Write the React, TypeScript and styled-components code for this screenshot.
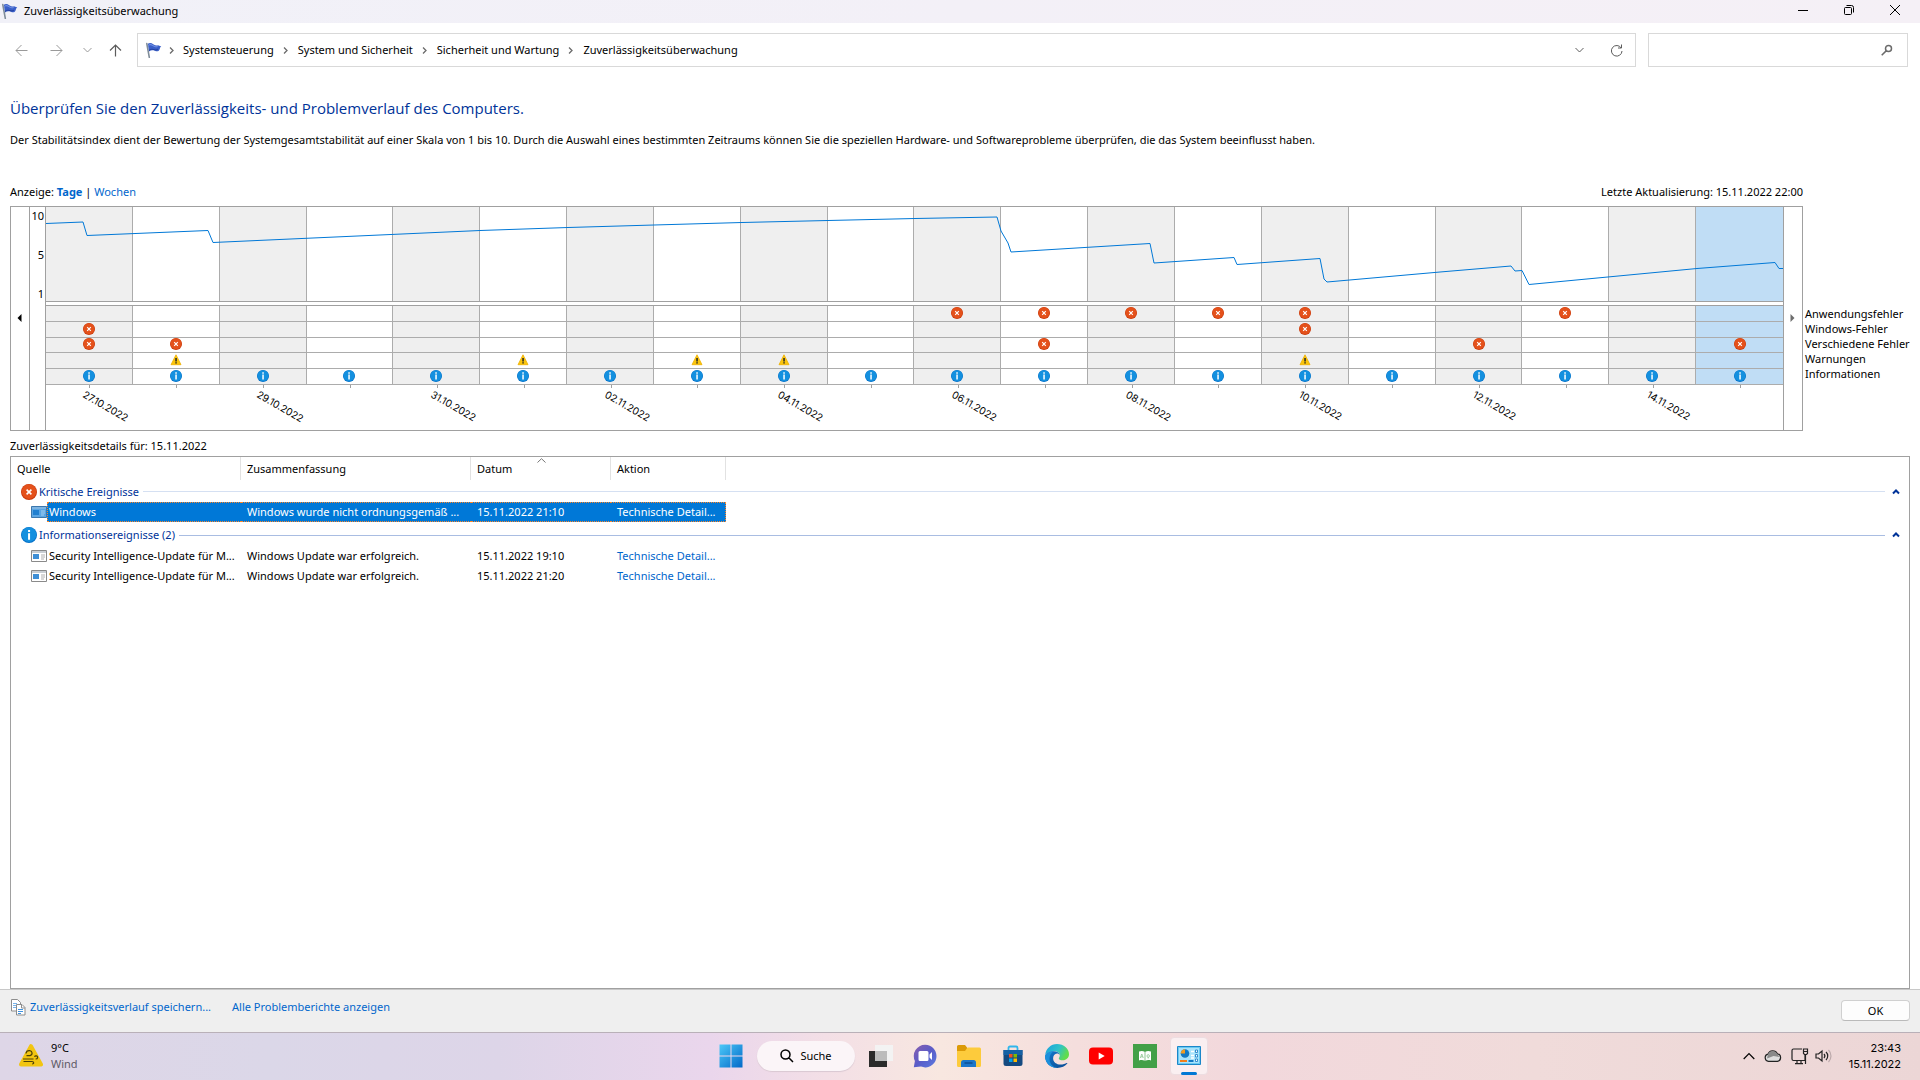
import React from 'react';
import styled, { createGlobalStyle, css } from 'styled-components';

const ui = '"Noto Sans", "Open Sans", sans-serif';
const uiNumbers = 'Inter, "Noto Sans", sans-serif';
const line = '#a0a0a0';
const link = '#0066cc';
const navy = '#003399';

const GlobalStyle = createGlobalStyle`
  *, *::before, *::after { box-sizing: border-box; }
  html, body { margin: 0; padding: 0; }
  body { background: #fff; color: #000; font: 11px/16px ${ui}; }
  button, input { font: inherit; color: inherit; }
  svg { display: block; flex: none; }
`;

/* ---------- shell ---------- */

const Desktop = styled.div`
  display: flex;
  flex-direction: column;
  min-height: 100vh;
`;

const PlainButton = styled.button`
  display: flex;
  align-items: center;
  justify-content: center;
  padding: 0;
  border: 0;
  background: none;
`;

const TitleBar = styled.header`
  display: flex;
  align-items: center;
  height: 23px;
  padding: 0 2px 1px;
  background: linear-gradient(90deg, #f1f1f8, #f3f0f7 50%, #f5f0f6);
`;

const WindowTitle = styled.h1`
  flex: 1;
  margin: 0;
  padding-left: 6px;
  font-size: 11px;
  font-weight: 400;
`;

const WindowButton = styled(PlainButton)`
  width: 46px;
  height: 20px;
  align-self: flex-start;
`;

const NavBar = styled.nav`
  display: flex;
  align-items: center;
  padding: 10px 12px 10px 4px;
`;

const NavButton = styled(PlainButton)<{ $width: number; $dim?: boolean }>`
  width: ${p => p.$width}px;
  height: 32px;
  color: ${p => (p.$dim ? '#9a9a9a' : '#5c5c5c')};
`;

const AddressBar = styled.div`
  display: flex;
  align-items: center;
  flex: 1;
  height: 34px;
  margin: 0 12px 0 7px;
  padding-left: 8px;
  border: 1px solid #d9d9d9;
  color: #6b6b6b;
`;

const Crumbs = styled.ol`
  display: flex;
  flex: 1;
  margin: 0;
  padding: 0;
  list-style: none;
`;

const Crumb = styled.li`
  display: flex;
  align-items: center;

  svg { margin: 0 8px; }
  &:first-child svg { margin: 0 7px 0 6px; }
`;

const CrumbLink = styled.a`
  color: #000;
  text-decoration: none;
`;

const SearchBox = styled.label`
  display: flex;
  align-items: center;
  width: 260px;
  height: 34px;
  padding-right: 14px;
  border: 1px solid #d9d9d9;
  color: #6b6b6b;
`;

const SearchInput = styled.input`
  flex: 1;
  min-width: 0;
  height: 30px;
  padding: 0 8px;
  border: 0;
  outline: 0;
  background: none;
`;

/* ---------- page ---------- */

const Main = styled.main`
  display: flex;
  flex-direction: column;
  flex: 1;
  padding: 19px 10px 0;
`;

const Heading = styled.h2`
  margin: 0 0 12px;
  color: ${navy};
  font: 400 15px/24px "Open Sans", "Noto Sans", sans-serif;
`;

const Intro = styled.p`
  margin: 0 0 36px;
`;

const ViewRow = styled.div`
  display: flex;
  justify-content: space-between;
  margin: 0 107px 6px 0;
`;

const TextLink = styled.a<{ $strong?: boolean }>`
  color: ${link};
  font-weight: ${p => (p.$strong ? 700 : 400)};
  text-decoration: none;
`;

const ChartRow = styled.section`
  display: flex;
`;

const ChartFrame = styled.div`
  display: flex;
  flex: 1;
  min-width: 0;
  border: 1px solid ${line};
`;

const ScrollButton = styled(PlainButton)<{ $enabled?: boolean }>`
  width: 18px;
  padding: 0 2px 2px 0;
  color: ${p => (p.$enabled ? '#000' : '#6d6d6d')};
`;

const Scale = styled.div`
  display: flex;
  flex-direction: column;
  justify-content: space-between;
  width: 15px;
  height: 95px;
  padding: 1px 1px 0 0;
  text-align: right;
`;

const ScaleColumn = styled.div`
  border-left: 1px solid ${line};
`;

const Plot = styled.div`
  flex: 1;
  min-width: 0;
  border: solid ${line};
  border-width: 0 1px;
`;

const DayGrid = styled.div`
  position: relative;
  display: grid;
  grid-template-columns: repeat(20, minmax(0, 1fr));
`;

const TrendGrid = styled(DayGrid)`
  height: 95px;
  border-bottom: 1px solid ${line};
`;

const EventGrid = styled(DayGrid)`
  grid-template-rows: repeat(5, minmax(0, 1fr));
  height: 80px;
  margin-top: 3px;
  border-top: 1px solid ${line};
`;

const dayFill = css<{ $day: number }>`
  background: ${p => (p.$day === 19 ? '#c0ddf5' : p.$day % 2 ? '#fff' : '#efefef')};
  border-right: ${p => (p.$day === 19 ? 0 : 1)}px solid #acacac;
`;

const TrendCell = styled.div<{ $day: number }>`
  ${dayFill}
`;

const EventCell = styled.div<{ $day: number }>`
  ${dayFill}
  display: flex;
  align-items: center;
  justify-content: center;
  padding-bottom: 1px;
  border-bottom: 1px solid #acacac;
`;

const TrendLine = styled.svg`
  position: absolute;
  inset: 0;
  width: 100%;
  height: 94px;
`;

const DateGrid = styled(DayGrid)`
  height: 45px;
`;

const DateCell = styled.div`
  &::before {
    content: '';
    display: block;
    width: 1px;
    height: 3px;
    margin-left: 50%;
    background: ${line};
  }
`;

const DateLabel = styled.time`
  display: block;
  margin-left: calc(50% - 2px);
  font: 10px/12px ${uiNumbers};
  white-space: nowrap;
  transform: rotate(30deg);
  transform-origin: left top;
`;

const Legend = styled.ul`
  width: 107px;
  margin: 0;
  padding: 100px 0 0 2px;
  list-style: none;
  line-height: 15px;
  white-space: nowrap;
`;

const Caption = styled.h3`
  margin: 7px 0 2px;
  font-size: 11px;
  font-weight: 400;
`;

const ListBox = styled.section`
  flex: 1;
  border: 1px solid ${line};
`;

const Table = styled.table`
  width: 100%;
  table-layout: fixed;
  border-collapse: separate;
  border-spacing: 0;
`;

const Col = styled.col<{ $width?: number }>`
  width: ${p => (p.$width ? `${p.$width}px` : 'auto')};
`;

const HeadCell = styled.th`
  position: relative;
  height: 24px;
  padding: 0;
  font-weight: 400;
`;

const HeadButton = styled.button`
  display: block;
  width: 100%;
  height: 23px;
  margin-bottom: 1px;
  padding: 1px 6px 0;
  border: 0;
  border-right: 1px solid #e2e2e2;
  background: none;
  text-align: left;
`;

const SortMark = styled.span`
  position: absolute;
  top: 1px;
  left: calc(50% - 4px);
  color: #777;
`;

const Group = styled.tbody`
  & + & > tr:first-child > th {
    height: 24px;
    padding-top: 2px;
  }
`;

const GroupCell = styled.th`
  height: 21px;
  padding: 0 9px 0 10px;
  color: ${navy};
  font-weight: 400;
`;

const GroupBar = styled.div`
  display: flex;
  align-items: center;
  gap: 2px;
`;

const GroupRule = styled.span<{ $strong?: boolean }>`
  flex: 1;
  height: 1px;
  margin: 0 5px 0 2px;
  background: ${p => (p.$strong ? '#a9bde2' : '#d5e0f2')};
`;

const EventRow = styled.tr<{ $selected?: boolean }>`
  color: ${p => (p.$selected ? '#fff' : '#000')};

  a { color: ${p => (p.$selected ? '#fff' : link)}; }
`;

const selectedFill = css`
  background: #0078d7;
  border: dotted #ff8728;
  border-width: 1px 0;
`;

const Cell = styled.td<{ $selected?: boolean; $last?: boolean }>`
  height: 20px;
  padding: 0 6px;
  white-space: nowrap;
  ${p => p.$selected && selectedFill}
  ${p => p.$selected && p.$last && 'border-right-width: 1px;'}
`;

const SourceCell = styled.td`
  height: 20px;
  padding: 0 0 0 20px;
`;

const Source = styled.div`
  display: flex;
  align-items: center;
`;

const SourceName = styled.span<{ $selected?: boolean }>`
  flex: 1;
  min-width: 0;
  height: 20px;
  padding-left: 2px;
  line-height: ${p => (p.$selected ? 18 : 20)}px;
  white-space: nowrap;
  ${p => p.$selected && selectedFill}
  ${p => p.$selected && 'border-left-width: 1px; padding-left: 1px;'}
`;

const Footer = styled.footer`
  display: flex;
  align-items: flex-start;
  height: 43px;
  padding: 9px 10px 0 11px;
  border-top: 1px solid #c8c8c8;
  background: #efefef;
`;

const FooterLinks = styled.div`
  display: flex;
  flex: 1;
  gap: 21px;
`;

const SaveLink = styled(TextLink)`
  display: flex;
  gap: 4px;
`;

const OkButton = styled.button`
  width: 69px;
  height: 21px;
  margin-top: 1px;
  padding: 0;
  border: 1px solid #d0d0d0;
  border-bottom-color: #bababa;
  border-radius: 4px;
  background: #fdfdfd;
  line-height: 18px;
`;

/* ---------- taskbar ---------- */

const Taskbar = styled.section`
  display: grid;
  grid-template-columns: 1fr auto 1fr;
  align-items: center;
  height: 48px;
  padding-bottom: 2px;
  border-top: 1px solid #b9b0b8;
  background: linear-gradient(90deg, #ded6e7 0%, #dbd7e8 14%, #ddd5e8 26%, #ead6ec 37%, #f3dfe6 43%,
    #f8e7e0 49%, #f5dedd 56%, #f2d8dc 65%, #f0dbda 80%, #ecd6d6 100%);
`;

const Weather = styled(PlainButton)`
  justify-content: flex-start;
  gap: 8px;
  padding-left: 19px;
  text-align: left;
`;

const Muted = styled.span`
  display: block;
  color: #5f5a66;
`;

const Apps = styled.div`
  display: flex;
  align-items: center;
`;

const AppButton = styled(PlainButton)`
  width: 44px;
  height: 40px;
`;

const ActiveApp = styled(AppButton)`
  position: relative;

  &::before {
    content: '';
    position: absolute;
    inset: 1px 3px;
    border: 1px solid #eddde1;
    border-radius: 4px;
    background: #faeff1;
  }
  &::after {
    content: '';
    position: absolute;
    bottom: 1px;
    left: 14px;
    width: 16px;
    height: 3px;
    border-radius: 2px;
    background: #0078d4;
  }
  svg { position: relative; }
`;

const SearchPill = styled(PlainButton)`
  gap: 6px;
  width: 98px;
  height: 30px;
  margin: 0 4px;
  border-radius: 15px;
  background: #fbf5f8;
  box-shadow: 0 1px 1px #d9c8d2;
`;

const Tray = styled.div`
  display: flex;
  align-items: center;
  justify-content: flex-end;
  padding-right: 19px;
`;

const TrayButton = styled(PlainButton)<{ $width: number }>`
  width: ${p => p.$width}px;
  height: 32px;
`;

const Clock = styled(PlainButton)`
  display: block;
  margin-left: 16px;
  font: 11px/16px ${uiNumbers};
  text-align: right;
`;

const ClockLine = styled.span`
  display: block;
`;

/* ---------- icons ---------- */

const Flag = () => (
  <svg width="16" height="16" viewBox="0 0 16 16">
    <path d="M.8 1.6 3.3 15.4" stroke="#7f8c99" strokeWidth="1.6" strokeLinecap="round" />
    <path d="M1.8 1.8C4 .4 5.600 1.200 7.200 2.200S10.600 3.800 12 3.200l3.300 1.300c-.8.400-1.300 1.200-1.500 2.200-.2 1.200-.9 2.200-2.100 2.500-1.700.4-2.900-.6-4.400-.9-1.500-.3-2.900.1-4.200 1.100Z" fill="#3a5fc8" />
    <path d="M2.300 3.300c2-1.200 3.500-.5 5 .5 1.500.9 2.900 1.200 4.200.8" stroke="#7d9bea" fill="none" strokeWidth="1" />
    <path d="M3.100 8.300c1.700-1.300 3.400-1.100 4.800-.7 1.500.5 2.800.5 4-.4" stroke="#223f9e" fill="none" strokeWidth="1" />
  </svg>
);

const Stroke = ({ d, w = 12, h = 12, sw = 1 }: { d: string; w?: number; h?: number; sw?: number }) => (
  <svg width={w} height={h} viewBox={`0 0 ${w} ${h}`} fill="none" stroke="currentColor" strokeWidth={sw}>
    <path d={d} />
  </svg>
);

const Critical = ({ size = 12 }: { size?: number }) => (
  <svg width={size} height={size} viewBox="0 0 12 12">
    <circle cx="6" cy="6" r="6" fill="#c93a0c" />
    <circle cx="6" cy="5.700" r="5.500" fill="#e4511b" />
    <path d="m4.200 4.200 3.600 3.600m0-3.600L4.200 7.800" stroke="#fff" strokeWidth="1.200" />
  </svg>
);

const Info = ({ size = 12 }: { size?: number }) => (
  <svg width={size} height={size} viewBox="0 0 12 12">
    <circle cx="6" cy="6" r="6" fill="#0672c9" />
    <circle cx="6" cy="5.700" r="5.500" fill="#1490df" />
    <path d="M5.300 2.300h1.500v1.400H5.300ZM5.300 4.600h1.500v5H5.300Z" fill="#fff" />
  </svg>
);

const Warning = () => (
  <svg width="12" height="12" viewBox="0 0 12 12">
    <path d="M6 .8 11 10.700H1Z" fill="#fbc50b" stroke="#eeb000" strokeWidth=".8" strokeLinejoin="round" />
    <path d="M5.300 4h1.500v3.400H5.300ZM5.300 8.200h1.500v1.400H5.300Z" fill="#222" />
  </svg>
);

const AppWindow = ({ tinted }: { tinted?: boolean }) => (
  <svg width="16" height="16" viewBox="0 0 16 16">
    <path d="M.5 2.500h15v11H.5Z" fill={tinted ? '#5aa5e3' : '#fff'} stroke={tinted ? '#3b77ad' : '#8a8a8a'} />
    <path d="M1 3h14v2H1Z" fill={tinted ? '#7db4e2' : '#c9ced3'} />
    <path d="M2 6h6v5H2Z" fill={tinted ? '#1f7fd0' : '#3f8fd6'} />
    <path d="M10 7h4M10 9h4M10 11h3" stroke={tinted ? '#a5cff0' : '#b0b0b0'} />
  </svg>
);

const CopyPages = () => (
  <svg width="15" height="17" viewBox="0 0 15 17">
    <path d="M.5.500h6l3 3v8.500h-9Z" fill="#fff" stroke="#8d8d8d" />
    <path d="M2 4.500h4M2 6.500h4M2 8.500h4" stroke="#78b4ea" />
    <path d="M5.500 5.500h5.500l3 3v7.500H5.500Z" fill="#fff" stroke="#8d8d8d" />
    <path d="M10.500 5.500V9H14" fill="none" stroke="#8d8d8d" />
    <path d="M7 10.500h5M7 12.500h5M7 14.500h3" stroke="#3f93e0" />
  </svg>
);

const WindIcon = () => (
  <svg width="24" height="23" viewBox="0 0 24 23">
    <path d="M12 2.200 22 20.500H2Z" fill="#f2c511" stroke="#f2c511" strokeWidth="4" strokeLinejoin="round" />
    <path d="M7 9.500c.3-2 2-3 3.700-2.800 3 .4 3.200 4.300.3 5H7.500" fill="none" stroke="#4e4208" strokeWidth="1.200" />
    <path d="M4 15h10.500M4.500 17.500h8.500c2.200 0 2.200 2.600.2 2.400M15.500 12.800c.8-1.600 3.300-1 3.100.8-.1 1-.9 1.400-2 1.400" fill="none" stroke="#4e4208" strokeWidth="1.200" />
  </svg>
);

const StartLogo = () => (
  <svg width="24" height="24" viewBox="0 0 24 24">
    <defs>
      <linearGradient id="start" x1="0" y1="0" x2="1" y2="1">
        <stop offset="0" stopColor="#4cc8f8" />
        <stop offset="1" stopColor="#0269c8" />
      </linearGradient>
    </defs>
    <path d="M.5.500h11v11H.500ZM12.500.500h11v11h-11ZM.5 12.500h11v11H.500ZM12.500 12.500h11v11h-11Z" fill="url(#start)" />
  </svg>
);

const TaskView = () => (
  <svg width="24" height="24" viewBox="0 0 24 24">
    <path d="M0 7h18v16H0Z" fill="#2b2b2b" />
    <path d="M6 1h18v16H6Z" fill="#f3f3f3" />
    <path d="M6 7h12v10H6Z" fill="#bcbcbc" />
  </svg>
);

const Chat = () => (
  <svg width="24" height="24" viewBox="0 0 24 24">
    <defs>
      <linearGradient id="chat" x1="0" y1="0" x2="1" y2="1">
        <stop offset="0" stopColor="#8a5fae" />
        <stop offset=".5" stopColor="#5a5cc8" />
        <stop offset="1" stopColor="#5b7be0" />
      </linearGradient>
    </defs>
    <path d="M12 .8a11.300 11.300 0 1 1-4 21.800L.8 23.200 1.900 17A11.300 11.300 0 0 1 12 .8Z" fill="url(#chat)" />
    <path d="M7 7h7a1.500 1.500 0 0 1 1.500 1.500v7A1.500 1.500 0 0 1 14 17H7a1.500 1.500 0 0 1-1.500-1.500v-7A1.500 1.500 0 0 1 7 7ZM16.500 10.500 19 8v8l-2.500-2.500Z" fill="#fff" />
  </svg>
);

const Folder = () => (
  <svg width="24" height="24" viewBox="0 0 24 24">
    <path d="M0 2.500A1.500 1.500 0 0 1 1.500 1H8l2 2.500V7H0Z" fill="#dc9a07" />
    <path d="M0 7h8l2.500-3.500H22.500A1.500 1.500 0 0 1 24 5v16.500A1.500 1.500 0 0 1 22.500 23h-21A1.500 1.500 0 0 1 0 21.500Z" fill="#fdcb3c" />
    <path d="M4 23v-4.500A2.500 2.500 0 0 1 6.500 16h10a2.500 2.500 0 0 1 2.500 2.500V23Z" fill="#1b76c9" />
    <path d="M7.500 19h8" stroke="#0d4f93" strokeWidth="1.500" />
  </svg>
);

const Store = () => (
  <svg width="24" height="24" viewBox="0 0 24 24">
    <path d="M7.500 6V4A1.500 1.500 0 0 1 9 2.500h6A1.500 1.500 0 0 1 16.500 4v2" fill="none" stroke="#30b6ec" strokeWidth="1.800" />
    <path d="M2.500 6h19v13.500a2.500 2.500 0 0 1-2.500 2.500H5a2.500 2.500 0 0 1-2.500-2.500Z" fill="#154a80" />
    <path d="M2.500 6h19v5h-19Z" fill="#1661a4" />
    <path d="M8 10h3.500v3.500H8Z" fill="#f25022" />
    <path d="M12.500 10H16v3.500h-3.500Z" fill="#7fba00" />
    <path d="M8 14.500h3.500V18H8Z" fill="#00a4ef" />
    <path d="M12.500 14.500H16V18h-3.500Z" fill="#ffb900" />
  </svg>
);

const Edge = () => (
  <svg width="24" height="24" viewBox="0 0 24 24">
    <defs>
      <linearGradient id="edgeTop" x1="0" y1="0" x2="1" y2=".4">
        <stop offset="0" stopColor="#1a9fe0" />
        <stop offset=".6" stopColor="#2fc3c8" />
        <stop offset="1" stopColor="#62dc4c" />
      </linearGradient>
      <linearGradient id="edgeLow" x1="0" y1="0" x2="1" y2="1">
        <stop offset="0" stopColor="#1278cc" />
        <stop offset="1" stopColor="#0c4c94" />
      </linearGradient>
    </defs>
    <path d="M.2 11C.8 4.800 5.800.100 12 .100c6.800 0 12 4.700 12 10.100 0 3.600-2.800 6-6.100 6-2.600 0-4.100-.9-4.100-1.800 0-.6 1-1.200 1-2.900 0-2.300-2.200-4.200-5.200-4.200C5.300 7.300 1.500 9 .2 11Z" fill="url(#edgeTop)" />
    <path d="M.1 12.500C.1 9.500 4.200 7.200 8.600 7.200c3.200 0 5.800 1.600 6.200 4-.5-1-1.600-1.700-2.800-1.700-2.300 0-3.900 2.200-3.900 4.700 0 4 3.500 6.300 7.300 6.300 2.700 0 5-.7 6.300-1.500.5-.3.900.2.600.600C20.300 22.300 16.500 23.900 12.300 23.900 5.500 23.900.1 19 .1 12.500Z" fill="url(#edgeLow)" />
    <path d="M8.600 7.200c-2.600 1.500-4.400 5-4 8.800.4 4 3.500 7.400 7.700 7.900C5.500 23.900.1 19 .1 12.500.100 9.500 4.200 7.200 8.600 7.200Z" fill="#1b8fdc" />
  </svg>
);

const YouTube = () => (
  <svg width="24" height="24" viewBox="0 0 24 24">
    <rect y="3.500" width="24" height="17" rx="4" fill="#f00" />
    <path d="m9.700 8.500 6 3.500-6 3.500Z" fill="#fff" />
  </svg>
);

const Dictionary = () => (
  <svg width="24" height="24" viewBox="0 0 24 24">
    <path d="M0 0h24v24H0Z" fill="#43a047" />
    <path d="M6 7.500c2-.8 4-.8 5.700.3v9c-1.700-1-3.700-.9-5.700-.3ZM12.300 7.800c1.700-1.100 3.700-1.100 5.700-.3v9c-2-.6-4-.7-5.700.3Z" fill="#fff" />
    <path d="m7.300 14 1.500-4 1.500 4M8 12.800h1.800M14 12a1.200 1.400 0 1 0 2.400 0 1.200 1.400 0 1 0-2.400 0M15.200 13v1.500" fill="none" stroke="#8cc58f" strokeWidth=".8" />
  </svg>
);

const ControlPanel = () => (
  <svg width="24" height="19" viewBox="0 0 24 19">
    <path d="M.5.500h23v18H.5Z" fill="#69c9f2" stroke="#1b87c9" />
    <path d="M2 2h20v15H2Z" fill="#a9e3fb" />
    <circle cx="8" cy="7.500" r="4.300" fill="#1279c4" />
    <path d="M8 7.500V3.200a4.300 4.300 0 0 0-4.300 4.300Z" fill="#f39b1f" />
    <path d="M3 15h7" stroke="#f07f1b" strokeWidth="2" />
    <path d="M11.500 15h5" stroke="#1279c4" strokeWidth="2" />
    <path d="M14 5.500h3M14 9.500h3M14 12h3" stroke="#fff" strokeWidth="1.500" />
    <path d="M18.500 4h2v2.500h-2ZM18.500 8.500h2V11h-2ZM18.500 13h2v2.500h-2Z" fill="#fff" stroke="#1279c4" strokeWidth=".8" />
  </svg>
);

const Cloud = () => (
  <svg width="18" height="14" viewBox="0 0 18 14">
    <path d="M4.500 12.300A3.600 3.600 0 0 1 4 5.200 5 5 0 0 1 13.300 4.800a3.800 3.800 0 0 1 .2 7.500Z" fill="#dedede" stroke="#222" strokeWidth="1.200" />
    <path d="M4 5.300A5 5 0 0 1 13.200 5L15.500 8 9.500 7 3 9.500Z" fill="#8a8a8a" />
  </svg>
);

const Network = () => (
  <svg width="18" height="18" viewBox="0 0 18 18" fill="none" stroke="#222" strokeWidth="1.200">
    <path d="M11 2H2.500A1.500 1.500 0 0 0 1 3.500v8.500A1.500 1.500 0 0 0 2.500 13.500H14V8M6 13.500V16.500M10 13.500V16.500M4 16.700h8M12.500 2h4v4.500l-1 1h-2l-1-1ZM12.500 4.500h4M14.500 8v9" />
  </svg>
);

const Speaker = () => (
  <svg width="18" height="14" viewBox="0 0 18 14" fill="none" stroke="#222" strokeWidth="1.200">
    <path d="M1 5h2.500L7 2v10L3.500 9H1ZM9 5a3 3 0 0 1 0 4M11 3a5.500 5.500 0 0 1 0 8" />
    <path d="M13.500 1a8.500 8.500 0 0 1 0 12" stroke="#bba9ab" />
  </svg>
);

/* ---------- data ---------- */

type Kind = 'critical' | 'warning' | 'info';

const crumbs = ['Systemsteuerung', 'System und Sicherheit', 'Sicherheit und Wartung', 'Zuverlässigkeitsüberwachung'];

const categories: { label: string; kind: Kind; days: number[] }[] = [
  { label: 'Anwendungsfehler', kind: 'critical', days: [10, 11, 12, 13, 14, 17] },
  { label: 'Windows-Fehler', kind: 'critical', days: [0, 14] },
  { label: 'Verschiedene Fehler', kind: 'critical', days: [0, 1, 11, 16, 19] },
  { label: 'Warnungen', kind: 'warning', days: [1, 5, 7, 8, 14] },
  { label: 'Informationen', kind: 'info', days: Array.from({ length: 20 }, (_, i) => i) },
];

const dates = [
  '27.10.2022', '29.10.2022', '31.10.2022', '02.11.2022', '04.11.2022',
  '06.11.2022', '08.11.2022', '10.11.2022', '12.11.2022', '14.11.2022',
];

const trend =
  '0,16.500 37,15 41,28.500 162,23.500 167,35.500 434,23.500 522,20.500 608,18 696,15.500 782,13.500 869,11.500 951,10 ' +
  '955,24 962,36 965,45 1104,36.500 1108,56 1188,50.500 1191,57.500 1274,51.500 1278,72 1281,75 1394,65 1465,59 ' +
  '1469,64 1476,63.500 1483,77.500 1651,61.500 1729,55.500 1733,61.500 1737,61.500';

const columns = [
  { label: 'Quelle', width: 230 },
  { label: 'Zusammenfassung', width: 230 },
  { label: 'Datum', width: 140, sorted: true },
  { label: 'Aktion', width: 115 },
];

const groups = [
  {
    label: 'Kritische Ereignisse',
    kind: 'critical' as Kind,
    rows: [{ source: 'Windows', summary: 'Windows wurde nicht ordnungsgemäß ...', date: '15.11.2022 21:10', selected: true }],
  },
  {
    label: 'Informationsereignisse (2)',
    kind: 'info' as Kind,
    rows: [
      { source: 'Security Intelligence-Update für M...', summary: 'Windows Update war erfolgreich.', date: '15.11.2022 19:10', selected: false },
      { source: 'Security Intelligence-Update für M...', summary: 'Windows Update war erfolgreich.', date: '15.11.2022 21:20', selected: false },
    ],
  },
];

const days = Array.from({ length: 20 }, (_, i) => i);
const icons = { critical: Critical, warning: Warning, info: Info };

/* ---------- views ---------- */

const StabilityChart = () => (
  <ChartRow>
    <ChartFrame>
      <ScrollButton $enabled aria-label="Zurück blättern">
        <svg width="5" height="8" viewBox="0 0 5 8"><path d="M4.500 0v8L.5 4Z" fill="currentColor" /></svg>
      </ScrollButton>
      <ScaleColumn>
        <Scale>
          <span>10</span>
          <span>5</span>
          <span>1</span>
        </Scale>
      </ScaleColumn>
      <Plot>
        <TrendGrid>
          {days.map(d => <TrendCell key={d} $day={d} />)}
          <TrendLine viewBox="0 0 1737 94" preserveAspectRatio="none">
            <polyline points={trend} fill="none" stroke="#0078d7" strokeWidth="1" vectorEffect="non-scaling-stroke" />
          </TrendLine>
        </TrendGrid>
        <EventGrid>
          {categories.map(c => {
            const Icon = icons[c.kind];
            return days.map(d => (
              <EventCell key={c.label + d} $day={d}>{c.days.includes(d) && <Icon />}</EventCell>
            ));
          })}
        </EventGrid>
        <DateGrid>
          {days.map(d => (
            <DateCell key={d}>{d % 2 === 0 && <DateLabel>{dates[d / 2]}</DateLabel>}</DateCell>
          ))}
        </DateGrid>
      </Plot>
      <ScrollButton aria-label="Vorwärts blättern">
        <svg width="5" height="8" viewBox="0 0 5 8"><path d="M.5 0v8l4-4Z" fill="currentColor" /></svg>
      </ScrollButton>
    </ChartFrame>
    <Legend>
      {categories.map(c => <li key={c.label}>{c.label}</li>)}
    </Legend>
  </ChartRow>
);

const DetailsTable = () => (
  <Table>
    <colgroup>
      {columns.map(c => <Col key={c.label} $width={c.width} />)}
      <Col />
    </colgroup>
    <thead>
      <tr>
        {columns.map(c => (
          <HeadCell key={c.label} scope="col">
            <HeadButton>{c.label}</HeadButton>
            {c.sorted && <SortMark><Stroke d="M.5 4.500 4.500.700l4 3.800" w={9} h={5} /></SortMark>}
          </HeadCell>
        ))}
        <td />
      </tr>
    </thead>
    {groups.map(g => {
      const Icon = icons[g.kind] as typeof Critical;
      return (
        <Group key={g.label}>
          <tr>
            <GroupCell colSpan={5} scope="rowgroup">
              <GroupBar>
                <Icon size={16} />
                <span>{g.label}</span>
                <GroupRule $strong={g.kind === 'info'} />
                <PlainButton aria-label={`${g.label} einklappen`}>
                  <Stroke d="M1 4.500 4 1.500l3 3" w={8} h={6} sw={2} />
                </PlainButton>
              </GroupBar>
            </GroupCell>
          </tr>
          {g.rows.map(r => (
            <EventRow key={r.date} $selected={r.selected}>
              <SourceCell>
                <Source>
                  <AppWindow tinted={r.selected} />
                  <SourceName $selected={r.selected}>{r.source}</SourceName>
                </Source>
              </SourceCell>
              <Cell $selected={r.selected}>{r.summary}</Cell>
              <Cell $selected={r.selected}>{r.date}</Cell>
              <Cell $selected={r.selected} $last><TextLink href="#details">Technische Detail...</TextLink></Cell>
              <td />
            </EventRow>
          ))}
        </Group>
      );
    })}
  </Table>
);

const apps = [
  { name: 'Taskansicht', Icon: TaskView },
  { name: 'Chat', Icon: Chat },
  { name: 'Explorer', Icon: Folder },
  { name: 'Microsoft Store', Icon: Store },
  { name: 'Microsoft Edge', Icon: Edge },
  { name: 'YouTube', Icon: YouTube },
  { name: 'Wörterbuch', Icon: Dictionary },
];

export default function App() {
  return (
    <Desktop>
      <GlobalStyle />
      <TitleBar>
        <Flag />
        <WindowTitle>Zuverlässigkeitsüberwachung</WindowTitle>
        <WindowButton aria-label="Minimieren"><Stroke d="M1 6.500h10" /></WindowButton>
        <WindowButton aria-label="Verkleinern">
          <Stroke d="M1.500 4.500a1 1 0 0 1 1-1h5a1 1 0 0 1 1 1v5a1 1 0 0 1-1 1h-5a1 1 0 0 1-1-1ZM3.500 1.500h5a2 2 0 0 1 2 2v5" />
        </WindowButton>
        <WindowButton aria-label="Schließen"><Stroke d="m1 1 10 10M11 1 1 11" /></WindowButton>
      </TitleBar>

      <NavBar>
        <NavButton $width={34} $dim aria-label="Zurück"><Stroke d="M12.500 6.500H1M6.500 1 1 6.500 6.500 12" w={13} h={13} /></NavButton>
        <NavButton $width={36} $dim aria-label="Vorwärts"><Stroke d="M.5 6.500H12M6.500 1 12 6.500 6.500 12" w={13} h={13} /></NavButton>
        <NavButton $width={26} $dim aria-label="Letzte Orte"><Stroke d="m.5 1 4 4 4-4" w={9} h={6} /></NavButton>
        <NavButton $width={30} aria-label="Nach oben"><Stroke d="M6.500 12.500V1M1 6.500 6.500 1 12 6.500" w={13} h={13} sw={1.2} /></NavButton>
        <AddressBar>
          <Flag />
          <Crumbs>
            {crumbs.map(c => (
              <Crumb key={c}>
                <Stroke d="m2 1.500 3 3-3 3" w={8} h={9} sw={1.3} />
                <CrumbLink href="#top">{c}</CrumbLink>
              </Crumb>
            ))}
          </Crumbs>
          <NavButton $width={38} aria-label="Verlauf"><Stroke d="m.5 1 4 4 4-4" w={9} h={6} /></NavButton>
          <NavButton $width={37} aria-label="Aktualisieren">
            <Stroke d="M11.200 4A5.300 5.300 0 1 0 12 7M11.500.500V4H8" w={13} h={13} />
          </NavButton>
        </AddressBar>
        <SearchBox>
          <SearchInput type="search" aria-label="Systemsteuerung durchsuchen" />
          <Stroke d="M4.500 4.500a3 3 0 1 0 6 0 3 3 0 1 0-6 0M5.400 6.600.7 11.300" sw={1.5} />
        </SearchBox>
      </NavBar>

      <Main>
        <Heading>Überprüfen Sie den Zuverlässigkeits- und Problemverlauf des Computers.</Heading>
        <Intro>
          Der Stabilitätsindex dient der Bewertung der Systemgesamtstabilität auf einer Skala von 1 bis 10. Durch die
          Auswahl eines bestimmten Zeitraums können Sie die speziellen Hardware- und Softwareprobleme überprüfen, die
          das System beeinflusst haben.
        </Intro>
        <ViewRow>
          <span>
            Anzeige: <TextLink href="#tage" $strong>Tage</TextLink> | <TextLink href="#wochen">Wochen</TextLink>
          </span>
          <span>Letzte Aktualisierung: 15.11.2022 22:00</span>
        </ViewRow>
        <StabilityChart />
        <Caption>Zuverlässigkeitsdetails für: 15.11.2022</Caption>
        <ListBox>
          <DetailsTable />
        </ListBox>
      </Main>

      <Footer>
        <FooterLinks>
          <SaveLink href="#speichern"><CopyPages />Zuverlässigkeitsverlauf speichern...</SaveLink>
          <TextLink href="#berichte">Alle Problemberichte anzeigen</TextLink>
        </FooterLinks>
        <OkButton>OK</OkButton>
      </Footer>

      <Taskbar>
        <Weather>
          <WindIcon />
          <span>9°C<Muted>Wind</Muted></span>
        </Weather>
        <Apps>
          <AppButton aria-label="Start"><StartLogo /></AppButton>
          <SearchPill>
            <Stroke d="M1 5.500a4.500 4.500 0 1 0 9 0 4.500 4.500 0 1 0-9 0M8.800 8.800 13 13" w={14} h={14} sw={1.5} />
            Suche
          </SearchPill>
          {apps.map(({ name, Icon }) => <AppButton key={name} aria-label={name}><Icon /></AppButton>)}
          <ActiveApp aria-label="Systemsteuerung"><ControlPanel /></ActiveApp>
        </Apps>
        <Tray>
          <TrayButton $width={24} aria-label="Ausgeblendete Symbole"><Stroke d="m.7 7 5.300-5.300L11.300 7" w={12} h={8} sw={1.2} /></TrayButton>
          <TrayButton $width={24} aria-label="OneDrive"><Cloud /></TrayButton>
          <TrayButton $width={30} aria-label="Netzwerk"><Network /></TrayButton>
          <TrayButton $width={18} aria-label="Lautstärke"><Speaker /></TrayButton>
          <Clock>
            <ClockLine>23:43</ClockLine>
            <ClockLine>15.11.2022</ClockLine>
          </Clock>
        </Tray>
      </Taskbar>
    </Desktop>
  );
}
